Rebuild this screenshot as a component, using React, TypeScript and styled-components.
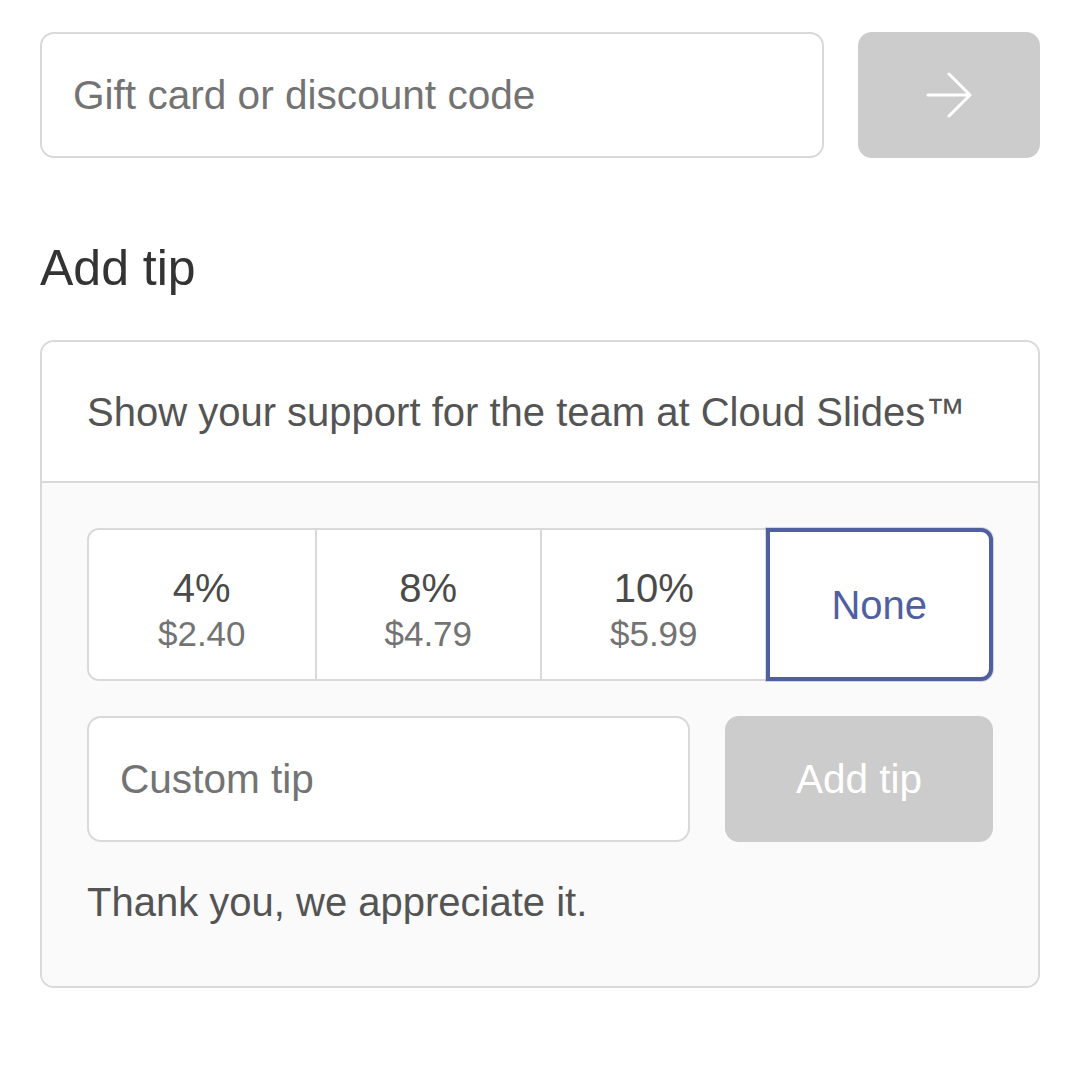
import React from "react";
import styled, { createGlobalStyle, css } from "styled-components";

const GlobalStyle = createGlobalStyle`
  html, body {
    margin: 0;
    padding: 0;
    background: #ffffff;
  }
  body {
    font-family: "Liberation Sans", Arial, Helvetica, sans-serif;
    -webkit-font-smoothing: antialiased;
  }
  * { box-sizing: border-box; }
`;

const Page = styled.div`
  width: 1080px;
  padding: 32px 40px 40px;
`;

const DiscountRow = styled.div`
  display: flex;
  gap: 34px;
  align-items: stretch;
`;

const TextField = styled.input<{ $height: number }>`
  flex: 1;
  min-width: 0;
  height: ${(p) => p.$height}px;
  border: 2px solid #d9d9d9;
  border-radius: 14px;
  background: #ffffff;
  padding: 0 31px;
  font-family: inherit;
  font-size: 40.6px;
  color: #333333;
  outline: none;
  &::placeholder {
    color: #737373;
    opacity: 1;
  }
`;

const GreyButton = styled.button<{ $width: number; $height: number }>`
  flex: none;
  width: ${(p) => p.$width}px;
  height: ${(p) => p.$height}px;
  border: none;
  border-radius: 14px;
  background: #cccccc;
  color: #ffffff;
  font-family: inherit;
  font-size: 40.5px;
  display: flex;
  align-items: center;
  justify-content: center;
  padding: 0;
  cursor: default;
`;

const Heading = styled.h2`
  margin: 80px 0 42px;
  font-size: 50px;
  line-height: 60px;
  font-weight: 400;
  color: #333333;
`;

const TipBox = styled.section`
  border: 2px solid #d9d9d9;
  border-radius: 14px;
  overflow: hidden;
`;

const TipHeader = styled.div`
  background: #ffffff;
  padding: 45.5px 45px;
  border-bottom: 2px solid #d9d9d9;
  font-size: 40px;
  line-height: 48px;
  color: #545454;
`;

const TipBody = styled.div`
  background: #fafafa;
  padding: 45px 45px 60px;
`;

const OptionRow = styled.div`
  display: grid;
  grid-template-columns: repeat(4, 1fr);
  height: 153px;
  border: 2px solid #d9d9d9;
  border-radius: 12px;
  background: #ffffff;
`;

const Option = styled.button<{ $selected?: boolean }>`
  position: relative;
  margin: 0;
  border: none;
  border-left: 2px solid #d9d9d9;
  background: #ffffff;
  font-family: inherit;
  display: flex;
  flex-direction: column;
  align-items: center;
  justify-content: center;
  padding: 12px 0 0;
  cursor: default;
  &:first-child {
    border-left: none;
    border-radius: 10px 0 0 10px;
  }
  ${(p) =>
    p.$selected &&
    css`
      margin: -2px -2px -2px 0;
      padding: 0;
      border: 4px solid #505f9f;
      border-radius: 0 12px 12px 0;
      box-shadow: 0 0 0 1px rgba(80, 95, 159, 0.25);
      z-index: 1;
    `}
`;

const Percent = styled.span`
  font-size: 40px;
  line-height: 45px;
  color: #4a4a4a;
`;

const Amount = styled.span`
  font-size: 35px;
  line-height: 45px;
  color: #737373;
`;

const NoneLabel = styled.span`
  font-size: 40px;
  line-height: 48px;
  color: #505f9f;
`;

const CustomRow = styled.div`
  display: flex;
  gap: 35px;
  margin-top: 35px;
`;

const Thanks = styled.p`
  margin: 36px 0 0;
  font-size: 40px;
  line-height: 48px;
  color: #545454;
`;

const ArrowIcon = () => (
  <svg width="46" height="46" viewBox="0 0 46 46" fill="none" aria-hidden="true">
    <path
      d="M2 23 H44 M23 2 L44 23 L23 44"
      stroke="#ffffff"
      strokeWidth="3"
      strokeLinecap="round"
      strokeLinejoin="round"
    />
  </svg>
);

const tips = [
  { percent: "4%", amount: "$2.40" },
  { percent: "8%", amount: "$4.79" },
  { percent: "10%", amount: "$5.99" },
];

export default function App() {
  return (
    <>
      <GlobalStyle />
      <Page>
        <DiscountRow>
          <TextField $height={126} placeholder="Gift card or discount code" />
          <GreyButton $width={182} $height={126} aria-label="Apply">
            <ArrowIcon />
          </GreyButton>
        </DiscountRow>

        <Heading>Add tip</Heading>

        <TipBox>
          <TipHeader>Show your support for the team at Cloud Slides™</TipHeader>
          <TipBody>
            <OptionRow>
              {tips.map((t) => (
                <Option key={t.percent}>
                  <Percent>{t.percent}</Percent>
                  <Amount>{t.amount}</Amount>
                </Option>
              ))}
              <Option $selected>
                <NoneLabel>None</NoneLabel>
              </Option>
            </OptionRow>
            <CustomRow>
              <TextField $height={126} placeholder="Custom tip" />
              <GreyButton $width={268} $height={126}>
                Add tip
              </GreyButton>
            </CustomRow>
            <Thanks>Thank you, we appreciate it.</Thanks>
          </TipBody>
        </TipBox>
      </Page>
    </>
  );
}
